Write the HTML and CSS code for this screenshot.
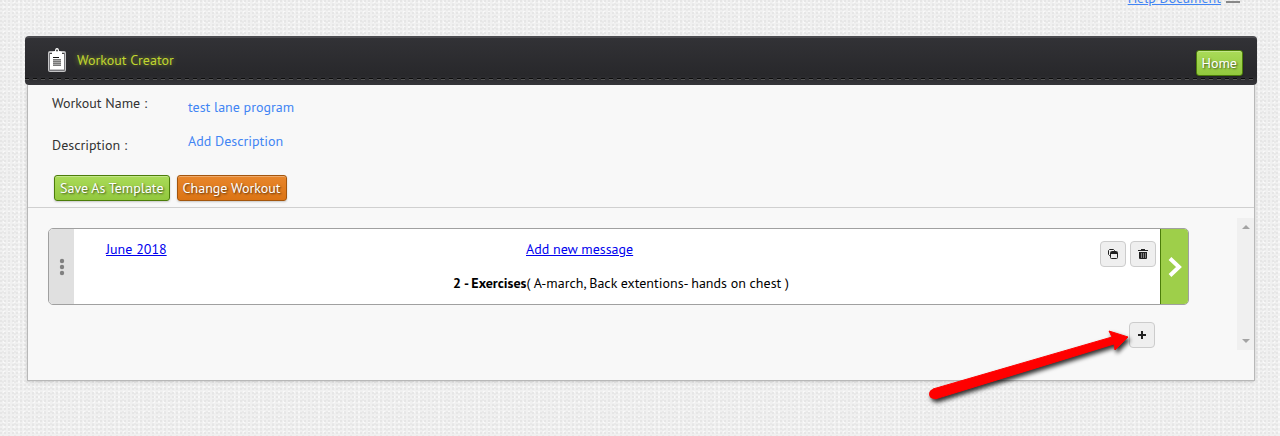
FILE: index.html
```html
<!DOCTYPE html>
<html lang="en">

<head>
    <meta charset="UTF-8">
    <title>Workout Creator</title>
    <link rel="stylesheet" href="styles.css">
</head>

<body>
    <div class="topBar">
        <a class="helpLink" href="#">Help Document</a>
        <span class="menuBar"></span>
    </div>

    <main>
        <header>
            <svg class="clipboard" width="18" height="24" viewBox="0 0 18 24">
                <rect x="0" y="3" width="18" height="21" rx="2" fill="#c4c4c6" />
                <path d="M1.500 5v17.500h15V5" fill="none" stroke="#77777b" />
                <path d="M2 5h14v16H2z" fill="#fff" />
                <path d="M4 7V4l3-1q0-3 2-3t2 3l3 1v3z" fill="#fff" />
                <path d="M2 5.500h2M14 5.500h2" stroke="#444" />
                <circle cx="9" cy="2.500" r="1" fill="#444" />
                <path d="M5 9.500h6" stroke="#111" />
                <path d="M5 11h8v7H5z" fill="#aaa" />
                <path d="M5 11.500h8M5 13.500h8M5 15.500h8M5 17.500h8" stroke="#777" />
            </svg>
            <h1>Workout Creator</h1>
            <button type="button" class="btn green">Home</button>
        </header>

        <div class="panel">
            <div class="details">
                <div class="row">
                    <span class="label">Workout Name :</span>
                    <a class="value" href="#">test lane program</a>
                </div>
                <div class="row description">
                    <span class="label">Description :</span>
                    <a class="value" href="#">Add Description</a>
                </div>
                <div class="buttons">
                    <button type="button" class="btn green">Save As Template</button>
                    <button type="button" class="btn orange">Change Workout</button>
                </div>
            </div>

            <div class="workouts">
                <div class="list">
                    <section class="card">
                        <div class="handle">
                            <svg width="6" height="18" viewBox="0 0 6 18" fill="#808080">
                                <circle cx="3" cy="3" r="2.200" />
                                <circle cx="3" cy="9" r="2.200" />
                                <circle cx="3" cy="15" r="2.200" />
                            </svg>
                        </div>
                        <div class="cardBody">
                            <div class="cardTop">
                                <a href="#">June 2018</a>
                                <a href="#">Add new message</a>
                                <div class="tools">
                                    <button type="button" class="iconBtn" aria-label="Copy">
                                        <svg width="10" height="10" viewBox="0 0 10 10">
                                            <path d="M2 6.500H1.500L.5 5.500V1.500l1-1h4l1 1V2" fill="none" stroke="#222" />
                                            <rect x="2.500" y="2.500" width="7" height="7" rx="1" fill="#efefef" stroke="#222" />
                                            <path d="M3 3h6v2H3z" fill="#222" />
                                        </svg>
                                    </button>
                                    <button type="button" class="iconBtn" aria-label="Delete">
                                        <svg width="10" height="10" viewBox="0 0 10 10">
                                            <path d="M3 0h4v1h3v1H0V1h3zM1 3h8v6q0 1-1 1H2q-1 0-1-1z" fill="#222" />
                                            <path d="M3.500 4v5M5.500 4v5M7.500 4v5" stroke="#aaa" stroke-width=".7" />
                                        </svg>
                                    </button>
                                </div>
                            </div>
                            <p><b>2 - Exercises</b>( A-march, Back extentions- hands on chest )</p>
                        </div>
                        <button type="button" class="next" aria-label="Open">
                            <svg width="14" height="20" viewBox="0 0 14 20">
                                <path d="M2 1.500L11 10L2 18.500" fill="none" stroke="#fff" stroke-width="4" />
                            </svg>
                        </button>
                    </section>

                    <div class="addRow">
                        <svg class="pointer" width="210" height="80" viewBox="0 0 210 80">
                            <circle cx="9" cy="69" r="5" fill="#f00" />
                            <path d="M8 64L187 12L184 6L203 12L190 25L189 19L10 74z" fill="#f00" stroke="#f00" stroke-linejoin="round" />
                        </svg>
                        <button type="button" class="iconBtn" aria-label="Add">
                            <svg width="8" height="8" viewBox="0 0 8 8">
                                <path d="M3 0h2v3h3v2H5v3H3V5H0V3h3z" fill="#222" />
                            </svg>
                        </button>
                    </div>
                </div>

                <div class="scrollbar">
                    <svg width="8" height="4" viewBox="0 0 8 4"><path d="M0 4L4 0L8 4z" fill="#a3a3a3" /></svg>
                    <svg width="8" height="4" viewBox="0 0 8 4"><path d="M0 0L4 4L8 0z" fill="#a3a3a3" /></svg>
                </div>
            </div>
        </div>
    </main>
</body>

</html>
```
FILE: styles.css
```css
* {
    margin: 0;
    padding: 0;
    box-sizing: border-box;
}

body {
    min-height: 100vh;
    font-family: "PT Sans", "Noto Sans", sans-serif;
    font-size: 14px;
    line-height: 20px;
    color: #333;
    background-color: #f0f0f0;
    background-image:
        radial-gradient(circle at 1px 1px, #e6e6e6 1px, transparent 1px),
        radial-gradient(circle at 3px 4px, #e9e9e9 1px, transparent 1px),
        radial-gradient(circle at 4px 2px, #f8f8f8 1px, transparent 1px);
    background-size: 4px 4px, 6px 6px, 5px 5px;
}

button {
    font: inherit;
    cursor: pointer;
}

.topBar {
    display: flex;
    justify-content: flex-end;
    align-items: flex-end;
    gap: 5px;
    height: 8px;
    padding-right: 40px;
}

.helpLink {
    color: #4285f4;
}

.menuBar {
    width: 14px;
    height: 2px;
    margin-bottom: 5px;
    background: #888;
}

main {
    margin: 28px 23px 0 25px;
}

header {
    display: flex;
    align-items: center;
    height: 49px;
    padding: 0 14px 0 23px;
    border-top: 2px solid #4c4c50;
    border-radius: 4px;
    background:
        repeating-linear-gradient(90deg, #0c0c0c 0, #0c0c0c 4px, transparent 4px, transparent 8px) 0 40px / 100% 1px no-repeat,
        repeating-linear-gradient(90deg, #555 0, #555 4px, transparent 4px, transparent 8px) 0 41px / 100% 1px no-repeat,
        linear-gradient(#323236, #28282b 80%, #38383c);
}

header h1 {
    flex: 1;
    margin-left: 11px;
    font-size: 14px;
    font-weight: normal;
    color: #c0d62f;
    text-shadow: 0 0 5px rgba(192, 214, 47, 0.6);
}

.clipboard,
header h1 {
    margin-bottom: 3px;
}

header .btn {
    margin-top: 3px;
}

.btn {
    height: 26px;
    padding: 0 5px;
    border: 1px solid;
    border-radius: 3px;
    color: #fff;
    font-weight: 500;
    text-shadow: 1px 1px 2px rgba(0, 0, 0, 0.6);
    box-shadow: inset 0 1px 0 rgba(255, 255, 255, 0.3), 0 1px 2px rgba(0, 0, 0, 0.2);
}

.green {
    border-color: #4c7d0a;
    background: linear-gradient(#aadb58, #92c83e);
}

.orange {
    border-color: #a3560e;
    background: linear-gradient(#e8862c, #dc7414);
}

.panel {
    margin: 0 2px;
    border: 1px solid #b8b8b8;
    border-top: none;
    background: #f8f8f8;
    box-shadow: 0 1px 3px rgba(0, 0, 0, 0.15);
}

.details {
    padding: 8px 24px 6px;
    border-bottom: 1px solid #d0d0d0;
}

.row {
    display: flex;
    align-items: flex-start;
    height: 34px;
}

.label {
    width: 136px;
}

.value {
    margin-top: 4px;
    color: #4285f4;
    text-decoration: none;
}

.description .label {
    margin-top: 8px;
}

.description {
    height: 48px;
}

.buttons {
    display: flex;
    gap: 7px;
    margin-left: 2px;
}

.workouts {
    display: flex;
    align-items: flex-start;
    padding: 10px 0 30px 20px;
}

.list {
    flex: 1;
    margin-right: 48px;
    padding-top: 10px;
}

.card {
    display: flex;
    height: 77px;
    border: 1px solid #a0a0a0;
    border-radius: 5px;
    background: #fff;
    overflow: hidden;
}

.handle {
    display: flex;
    align-items: center;
    justify-content: center;
    width: 25px;
    background: #e0e0e0;
}

.cardBody {
    flex: 1;
    padding: 12px 4px 0 32px;
    color: #000;
}

.cardTop {
    display: grid;
    grid-template-columns: 420px 1fr auto;
    height: 32px;
    line-height: 17px;
}

.cardTop a {
    color: #00e;
}

.tools {
    display: flex;
    gap: 4px;
}

.cardBody p {
    margin-right: 20px;
    text-align: center;
}

.iconBtn {
    display: flex;
    align-items: center;
    justify-content: center;
    width: 26px;
    height: 26px;
    border: 1px solid #ccc;
    border-radius: 4px;
    background: #efefef;
}

.next {
    display: flex;
    align-items: center;
    justify-content: center;
    width: 28px;
    border: none;
    border-left: 1px solid #4c7d0a;
    background: #9ecf4a;
}

.addRow {
    position: relative;
    display: flex;
    justify-content: flex-end;
    padding: 17px 34px 0 0;
}

/* arrow laid over the page, its tip on the add button */
.pointer {
    position: absolute;
    top: 20px;
    right: 54px;
    fill: none;
    filter: drop-shadow(2px 3px 2px rgba(0, 0, 0, 0.8));
}

.scrollbar {
    display: flex;
    flex-direction: column;
    align-items: center;
    justify-content: space-between;
    width: 17px;
    height: 132px;
    padding: 7px 0;
    background: #f0f0f0;
}
```
